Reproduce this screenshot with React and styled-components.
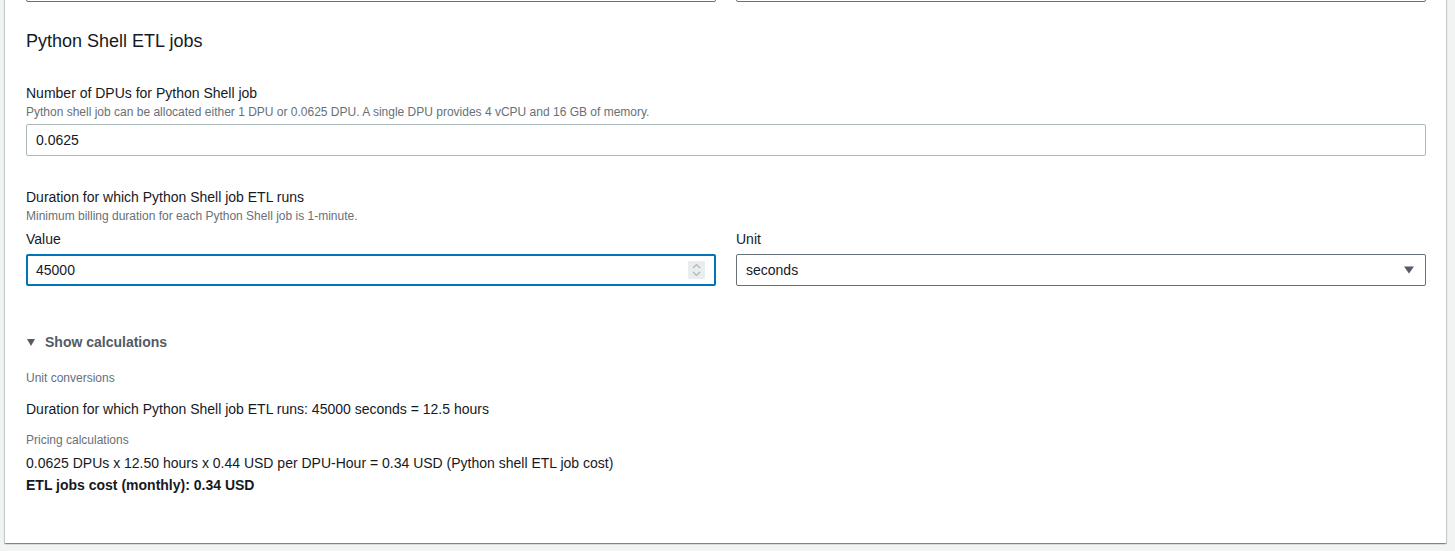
import React from "react";
import styled, { createGlobalStyle } from "styled-components";

const Global = createGlobalStyle`
  html, body { margin: 0; padding: 0; background: #f2f3f3; }
  body { font-family: "Liberation Sans", Arial, sans-serif; color: #16191f; overflow: hidden; }
  * { box-sizing: border-box; }
`;

const Page = styled.div`
  width: 1455px;
  height: 551px;
  overflow: hidden;
  padding-left: 5px;
  padding-right: 9px;
`;

const Card = styled.section`
  margin-top: -38px;
  background: #fff;
  padding: 8px 20px 47px 21px;
  box-shadow: 0 1px 1px 0 rgba(0, 28, 36, 0.3), 1px 1px 1px 0 rgba(0, 28, 36, 0.15),
    -1px 1px 1px 0 rgba(0, 28, 36, 0.15);
`;

const Row = styled.div`
  display: grid;
  grid-template-columns: 1fr 1fr;
  column-gap: 20px;
  margin-top: ${(p) => p.$top || 0}px;
`;

const Field = styled.div`
  display: flex;
  flex-direction: column;
  margin-top: ${(p) => p.$top || 0}px;
`;

const Heading = styled.h2`
  margin: 27px 0 0;
  font-size: 18px;
  font-weight: 400;
  line-height: 24px;
  color: #16191f;
`;

const Label = styled.div`
  font-size: 14px;
  line-height: 20px;
  color: #16191f;
`;

const Desc = styled.div`
  font-size: 12px;
  line-height: 18px;
  color: #687078;
  margin-bottom: 3px;
`;

const InputBox = styled.div`
  position: relative;
  height: 32px;
  display: flex;
  align-items: center;
  font-size: 14px;
  color: #16191f;
  background: #fff;
  border-radius: 2px;
  border: ${(p) => (p.$focus ? "2px solid #0073bb" : p.$select ? "1px solid #687078" : "1px solid #aab7b8")};
  padding-left: ${(p) => (p.$focus ? 8 : 9)}px;
`;

const Spinner = styled.div`
  position: absolute;
  right: 9px;
  top: 5px;
  width: 17px;
  height: 18px;
  background: #eaeded;
  display: flex;
  align-items: center;
  justify-content: center;
`;

const Caret = styled.div`
  position: absolute;
  right: 11px;
  top: 50%;
  transform: translateY(-50%);
  width: 0;
  height: 0;
  border-left: 5px solid transparent;
  border-right: 5px solid transparent;
  border-top: 7px solid #545b64;
`;

const Toggle = styled.div`
  display: flex;
  align-items: center;
  gap: 10px;
  margin-top: 45px;
  padding-left: 1px;
  font-size: 14px;
  font-weight: 700;
  line-height: 22px;
  color: #545b64;
`;

const ToggleIcon = styled.span`
  width: 0;
  height: 0;
  border-left: 4px solid transparent;
  border-right: 4px solid transparent;
  border-top: 7px solid #545b64;
`;

const SubHead = styled.div`
  font-size: 12px;
  line-height: 16px;
  color: #687078;
  margin-top: ${(p) => p.$top}px;
`;

const Line = styled.div`
  font-size: 14px;
  line-height: 22px;
  font-weight: ${(p) => (p.$bold ? 700 : 400)};
  margin-top: ${(p) => p.$top || 0}px;
`;

export default function App() {
  return (
    <>
      <Global />
      <Page>
        <Card>
          <Row>
            <InputBox $select />
            <InputBox $select />
          </Row>
          <Heading>Python Shell ETL jobs</Heading>
          <Field $top={30}>
            <Label>Number of DPUs for Python Shell job</Label>
            <Desc>Python shell job can be allocated either 1 DPU or 0.0625 DPU. A single DPU provides 4 vCPU and 16 GB of memory.</Desc>
            <InputBox>0.0625</InputBox>
          </Field>
          <Field $top={31}>
            <Label>Duration for which Python Shell job ETL runs</Label>
            <Desc>Minimum billing duration for each Python Shell job is 1-minute.</Desc>
            <Row $top={1}>
              <Field>
                <Label>Value</Label>
                <Field $top={5}>
                  <InputBox $focus>
                    45000
                    <Spinner>
                      <svg width="9" height="14" viewBox="0 0 9 14" fill="none" stroke="#aab7b8" strokeWidth="1.2">
                        <path d="M1 5 L4.5 1.5 L8 5" />
                        <path d="M1 9 L4.5 12.5 L8 9" />
                      </svg>
                    </Spinner>
                  </InputBox>
                </Field>
              </Field>
              <Field>
                <Label>Unit</Label>
                <Field $top={5}>
                  <InputBox $select>
                    seconds
                    <Caret />
                  </InputBox>
                </Field>
              </Field>
            </Row>
          </Field>
          <Toggle>
            <ToggleIcon />
            Show calculations
          </Toggle>
          <SubHead $top={17}>Unit conversions</SubHead>
          <Line $top={12}>Duration for which Python Shell job ETL runs: 45000 seconds = 12.5 hours</Line>
          <SubHead $top={12}>Pricing calculations</SubHead>
          <Line $top={4}>0.0625 DPUs x 12.50 hours x 0.44 USD per DPU-Hour = 0.34 USD (Python shell ETL job cost)</Line>
          <Line $bold>ETL jobs cost (monthly): 0.34 USD</Line>
        </Card>
      </Page>
    </>
  );
}
